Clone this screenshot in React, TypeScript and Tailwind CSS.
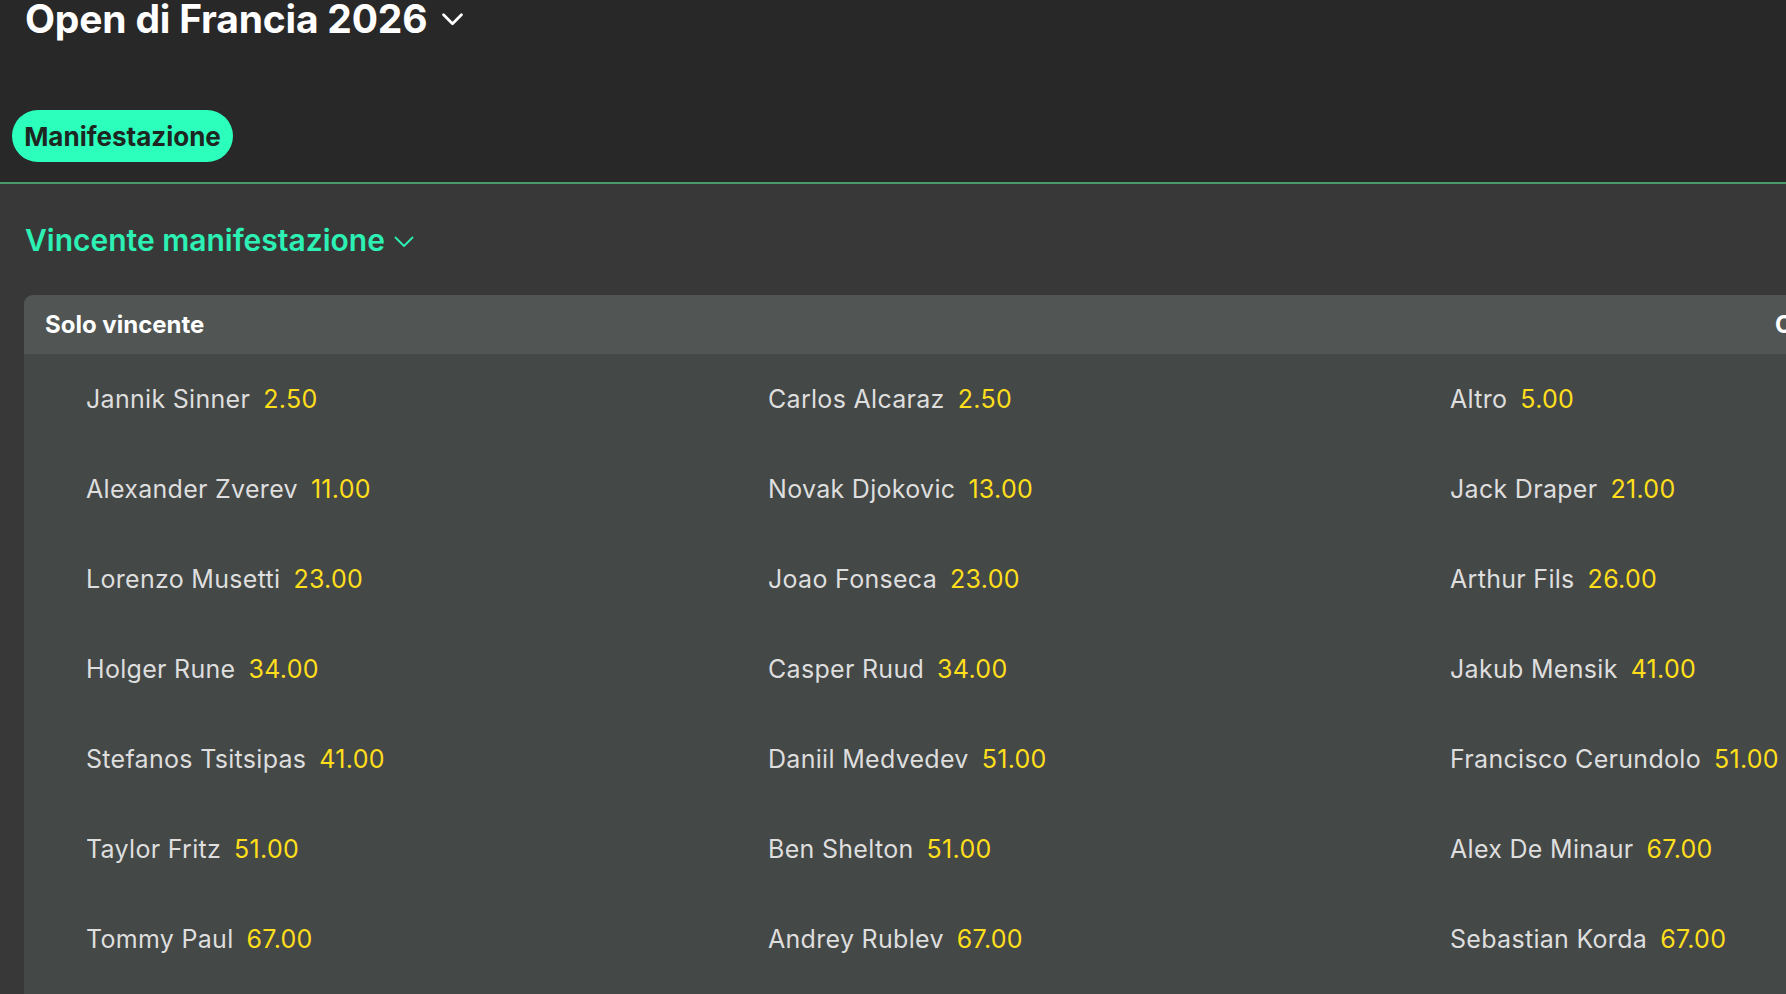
const rows: [string, string][][] = [
  [["Jannik Sinner", "2.50"], ["Carlos Alcaraz", "2.50"], ["Altro", "5.00"]],
  [["Alexander Zverev", "11.00"], ["Novak Djokovic", "13.00"], ["Jack Draper", "21.00"]],
  [["Lorenzo Musetti", "23.00"], ["Joao Fonseca", "23.00"], ["Arthur Fils", "26.00"]],
  [["Holger Rune", "34.00"], ["Casper Ruud", "34.00"], ["Jakub Mensik", "41.00"]],
  [["Stefanos Tsitsipas", "41.00"], ["Daniil Medvedev", "51.00"], ["Francisco Cerundolo", "51.00"]],
  [["Taylor Fritz", "51.00"], ["Ben Shelton", "51.00"], ["Alex De Minaur", "67.00"]],
  [["Tommy Paul", "67.00"], ["Andrey Rublev", "67.00"], ["Sebastian Korda", "67.00"]],
];

const Chevron = ({ className, stroke }: { className: string; stroke: number }) => (
  <svg viewBox="0 0 20 12" className={className} fill="none">
    <path d="M1.5 1.5 L10 10 L18.5 1.5" stroke="currentColor" strokeWidth={stroke} strokeLinecap="round" strokeLinejoin="round" />
  </svg>
);

const App = () => (
  <div className="w-[1786px] h-[994px] overflow-hidden bg-[#383838] font-['Inter',sans-serif]">
    {/* Event header */}
    <div className="h-[184px] bg-[#282828] border-b-2 border-[#4b9a6c] px-3 flex flex-col">
      <div className="flex items-center mt-[-5px] pl-[13px]">
        <h1 className="text-[39px] leading-[48px] font-bold text-white tracking-[-0.2px]">Open di Francia 2026</h1>
        <Chevron className="w-[21px] h-[13px] ml-[15px] text-white" stroke={2.6} />
      </div>
      <div className="mt-[67px]">
        <button className="h-[52px] w-[221px] rounded-full bg-[#2cffbc] text-[#1e2622] text-[26px] font-bold flex items-center justify-center">
          Manifestazione
        </button>
      </div>
    </div>

    {/* Market */}
    <div className="pl-[24px] flex flex-col">
      <div className="flex items-center mt-[36px] pl-px h-[40px]">
        <h2 className="text-[30px] leading-[40px] font-semibold text-[#2cf0b4]">Vincente manifestazione</h2>
        <Chevron className="w-[20px] h-[12px] ml-[9px] mt-[4px] text-[#2cf0b4]" stroke={1.8} />
      </div>

      <div className="mt-[35px] w-[2110px] rounded-t-[9px] overflow-hidden bg-[#444847]">
        <div className="h-[59px] bg-[#515654] grid grid-cols-[1730px_1fr] items-center pl-[21px]">
          <span className="text-[24px] font-bold text-white">Solo vincente</span>
          <span className="text-[24px] font-bold text-white">Cash Out</span>
        </div>
        <div className="pl-[62px] pt-px pb-[40px]">
          {rows.map((row, i) => (
            <div key={i} className="grid grid-cols-[682px_682px_682px] h-[90px] items-center">
              {row.map(([name, odd]) => (
                <div key={name} className="flex items-center gap-[13px] text-[25px] tracking-[0.3px]">
                  <span className="text-[#dedede]">{name}</span>
                  <span className="text-[#ffdf1b]">{odd}</span>
                </div>
              ))}
            </div>
          ))}
        </div>
      </div>
    </div>
  </div>
);

export default App;
